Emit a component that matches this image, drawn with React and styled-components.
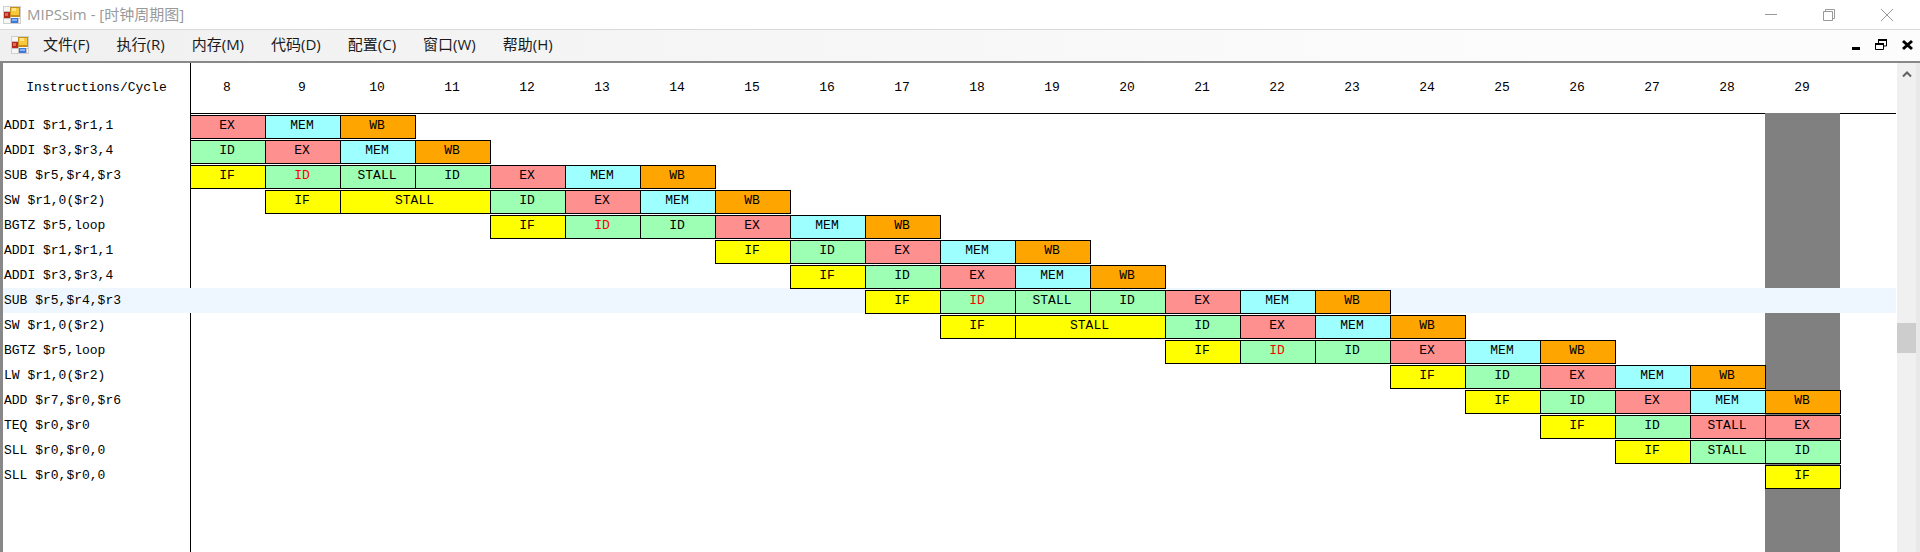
import React from 'react';
import styled, { createGlobalStyle, css } from 'styled-components';

const GlobalStyle = createGlobalStyle`
  *, *::before, *::after { box-sizing: border-box; }
  body { margin: 0; background: #fff; }
`;

const uiFont = '"Open Sans", "Noto Sans CJK SC", sans-serif';

const Window = styled.div`
  display: flex;
  flex-direction: column;
  min-height: 100vh;
  color: #000;
  font: 15px/20px ${uiFont};
`;

const TitleBar = styled.header`
  display: flex;
  align-items: center;
  height: 29px;
  padding: 0 4px 0 3px;
  gap: 6px;
`;

const Title = styled.h1`
  flex: 1;
  margin: 0;
  padding-bottom: 2px;
  font-size: 15px;
  font-weight: 400;
  line-height: 20px;
  color: #999;
`;

const CaptionButtons = styled.div`
  display: flex;
`;

const CaptionButton = styled.button`
  display: flex;
  align-items: center;
  justify-content: center;
  width: ${(p) => (p.$compact ? 26 : 58)}px;
  height: 28px;
  padding: 0;
  border: 0;
  background: none;
  color: ${(p) => (p.$compact ? '#000' : '#999')};
`;

const MenuBar = styled.nav`
  display: flex;
  align-items: center;
  height: 34px;
  padding: 0 0 2px 11px;
  border-top: 1px solid #d9d9d9;
  border-bottom: 2px solid #888;
  background: linear-gradient(90deg, #f0f0f0, #fcfcfc 80%);
`;

const MenuList = styled.div`
  display: flex;
  flex: 1;
  gap: 1px;
  padding: 0 0 1px 1px;
`;

const MenuButton = styled.button`
  padding: 0 13px;
  border: 0;
  background: none;
  color: #1a1a1a;
  font: 15px/20px ${uiFont};
  white-space: nowrap;
`;

const Workspace = styled.main`
  display: flex;
  flex: 1;
  border-left: 3px solid #888;
  border-right: 4px solid #e8e8e8;
`;

const ChartPane = styled.div`
  display: flex;
  flex: 1;
  min-width: 0;
  overflow: hidden;
`;

const Chart = styled.table`
  flex: 1;
  width: 100%;
  table-layout: fixed;
  border-spacing: 0;
  font: 13px/20px "Liberation Mono", monospace;
`;

const LabelCol = styled.col`
  width: 187px;
`;

const CycleCol = styled.col`
  width: 75px;
`;

const CornerHead = styled.th`
  height: 50px;
  padding: 0;
  font-weight: 400;
`;

const CycleHead = styled.th`
  padding: 0 1px 0 0;
  font-weight: 400;
  box-shadow: 0 1px 0 #000${(p) => (p.$axis ? ', inset 1px 0 0 #000' : '')};
`;

const Row = styled.tr`
  height: 25px;
`;

const InstructionHead = styled.th`
  padding: 0 0 0 1px;
  font-weight: 400;
  text-align: left;
  white-space: nowrap;
  background: ${(p) => (p.$selected ? '#eef6ff' : 'none')};
`;

const Slot = styled.td`
  padding: 2px 0 0;
  vertical-align: top;
  ${(p) => p.$axis && css`box-shadow: inset 1px 0 0 #000;`}
  ${(p) => p.$current && css`background: #808080;`}
  ${(p) => p.$selected && css`background: #eef6ff; box-shadow: none;`}
`;

const stageColors = {
  IF: '#ffff00',
  ID: '#9dffb4',
  EX: '#ff9090',
  MEM: '#9dffff',
  WB: '#ffa500',
};

const Stage = styled.div`
  position: relative;
  height: 24px;
  margin: 0 -1px -1px 0;
  padding-right: 2px;
  border: 1px solid #000;
  background: ${(p) => stageColors[p.$stage]};
  color: ${(p) => (p.$hazard ? '#ff0000' : '#000')};
  line-height: 20px;
  text-align: center;
`;

const ScrollTrack = styled.div`
  display: flex;
  flex-direction: column;
  align-items: center;
  width: 19px;
  margin-left: 1px;
  background: #f0f0f0;
`;

const ScrollArrow = styled.button`
  display: flex;
  align-items: center;
  justify-content: center;
  width: 19px;
  height: 22px;
  padding: 0;
  border: 0;
  background: none;
`;

const ScrollThumb = styled.div`
  width: 19px;
  height: 30px;
  margin-top: 238px;
  background: #cdcdcd;
`;

function AppIcon() {
  return (
    <svg width="18" height="18" viewBox="0 0 18 18" aria-hidden="true">
      <rect x="0.5" y="0.5" width="17" height="17" fill="#f6f6f6" stroke="#cfcfcf" />
      <path d="M7.5 1v16M1 5.500h6M1 12.500h16M15.500 12v5" stroke="#c4c4c4" />
      <rect x="1" y="6" width="6" height="6" fill="#b52a1c" />
      <rect x="2" y="7" width="3" height="3" fill="#d96a5c" />
      <rect x="7" y="1" width="10" height="10" fill="#c98f14" />
      <rect x="8" y="2" width="8" height="7" fill="#f8c93c" />
      <rect x="9" y="2" width="4" height="3" fill="#ffe48a" />
      <rect x="8" y="12" width="7" height="5" fill="#3f78d8" />
      <rect x="9" y="13" width="5" height="2" fill="#86b4f5" />
    </svg>
  );
}

const cycles = Array.from({ length: 22 }, (_, i) => i + 8);
const currentCycle = 29;

const s = (stage, span = 1, text = stage) => ({ stage, span, text });
const hazard = { ...s('ID'), hazard: true };

const program = [
  { code: 'ADDI $r1,$r1,1', start: 8, stages: [s('EX'), s('MEM'), s('WB')] },
  { code: 'ADDI $r3,$r3,4', start: 8, stages: [s('ID'), s('EX'), s('MEM'), s('WB')] },
  { code: 'SUB $r5,$r4,$r3', start: 8, stages: [s('IF'), hazard, s('ID', 1, 'STALL'), s('ID'), s('EX'), s('MEM'), s('WB')] },
  { code: 'SW $r1,0($r2)', start: 9, stages: [s('IF'), s('IF', 2, 'STALL'), s('ID'), s('EX'), s('MEM'), s('WB')] },
  { code: 'BGTZ $r5,loop', start: 12, stages: [s('IF'), hazard, s('ID'), s('EX'), s('MEM'), s('WB')] },
  { code: 'ADDI $r1,$r1,1', start: 15, stages: [s('IF'), s('ID'), s('EX'), s('MEM'), s('WB')] },
  { code: 'ADDI $r3,$r3,4', start: 16, stages: [s('IF'), s('ID'), s('EX'), s('MEM'), s('WB')] },
  { code: 'SUB $r5,$r4,$r3', start: 17, selected: true, stages: [s('IF'), hazard, s('ID', 1, 'STALL'), s('ID'), s('EX'), s('MEM'), s('WB')] },
  { code: 'SW $r1,0($r2)', start: 18, stages: [s('IF'), s('IF', 2, 'STALL'), s('ID'), s('EX'), s('MEM'), s('WB')] },
  { code: 'BGTZ $r5,loop', start: 21, stages: [s('IF'), hazard, s('ID'), s('EX'), s('MEM'), s('WB')] },
  { code: 'LW $r1,0($r2)', start: 24, stages: [s('IF'), s('ID'), s('EX'), s('MEM'), s('WB')] },
  { code: 'ADD $r7,$r0,$r6', start: 25, stages: [s('IF'), s('ID'), s('EX'), s('MEM'), s('WB')] },
  { code: 'TEQ $r0,$r0', start: 26, stages: [s('IF'), s('ID'), s('EX', 1, 'STALL'), s('EX')] },
  { code: 'SLL $r0,$r0,0', start: 27, stages: [s('IF'), s('ID', 1, 'STALL'), s('ID')] },
  { code: 'SLL $r0,$r0,0', start: 29, stages: [s('IF')] },
];

const menus = ['文件(F)', '执行(R)', '内存(M)', '代码(D)', '配置(C)', '窗口(W)', '帮助(H)'];

function InstructionRow({ code, start, stages, selected }) {
  const slots = [];
  let cycle = cycles[0];
  let next = 0;
  while (cycle <= currentCycle) {
    const stage = cycle >= start ? stages[next++] : undefined;
    slots.push(
      <Slot
        key={cycle}
        colSpan={stage ? stage.span : 1}
        $axis={cycle === cycles[0]}
        $current={cycle === currentCycle}
        $selected={selected}
      >
        {stage && <Stage $stage={stage.stage} $hazard={stage.hazard}>{stage.text}</Stage>}
      </Slot>
    );
    cycle += stage ? stage.span : 1;
  }
  return (
    <Row>
      <InstructionHead scope="row" $selected={selected}>{code}</InstructionHead>
      {slots}
      <Slot $selected={selected} />
    </Row>
  );
}

export default function App() {
  return (
    <Window>
      <GlobalStyle />
      <TitleBar>
        <AppIcon />
        <Title>MIPSsim - [时钟周期图]</Title>
        <CaptionButtons>
          <CaptionButton aria-label="Minimize">
            <svg width="12" height="12" stroke="currentColor"><path d="M0 5.5h12" /></svg>
          </CaptionButton>
          <CaptionButton aria-label="Restore">
            <svg width="12" height="12" fill="none" stroke="currentColor">
              <path d="M0.5 2.5h9v9h-9zM2.5 2.5v-2h9v9h-2" />
            </svg>
          </CaptionButton>
          <CaptionButton aria-label="Close">
            <svg width="12" height="12" stroke="currentColor"><path d="M0 0l12 12M12 0L0 12" /></svg>
          </CaptionButton>
        </CaptionButtons>
      </TitleBar>
      <MenuBar>
        <AppIcon />
        <MenuList>
          {menus.map((m) => <MenuButton key={m}>{m}</MenuButton>)}
        </MenuList>
        <CaptionButtons>
          <CaptionButton $compact aria-label="Minimize chart">
            <svg width="12" height="12" fill="currentColor"><path d="M3 8h8v3H3z" /></svg>
          </CaptionButton>
          <CaptionButton $compact aria-label="Restore chart">
            <svg width="12" height="12" fill="none" stroke="currentColor">
              <path d="M0.5 4.5h8v6h-8zM3.5 4v-3h8v6h-3" />
              <path d="M0 5h9M3 1h9" strokeWidth="2" />
            </svg>
          </CaptionButton>
          <CaptionButton $compact aria-label="Close chart">
            <svg width="12" height="12" stroke="currentColor" strokeWidth="3"><path d="M2 2l9 8M11 2L2 10" /></svg>
          </CaptionButton>
        </CaptionButtons>
      </MenuBar>
      <Workspace>
        <ChartPane>
          <Chart>
            <colgroup>
              <LabelCol />
              {cycles.map((c) => <CycleCol key={c} />)}
              <col />
            </colgroup>
            <thead>
              <tr>
                <CornerHead scope="col">Instructions/Cycle</CornerHead>
                {cycles.map((c) => <CycleHead key={c} scope="col" $axis={c === cycles[0]}>{c}</CycleHead>)}
                <CycleHead as="td" />
              </tr>
            </thead>
            <tbody>
              {program.map((row, i) => <InstructionRow key={i} {...row} />)}
              <tr>
                <td />
                {cycles.map((c) => <Slot key={c} $axis={c === cycles[0]} $current={c === currentCycle} />)}
                <td />
              </tr>
            </tbody>
          </Chart>
        </ChartPane>
        <ScrollTrack>
          <ScrollArrow aria-label="Scroll up">
            <svg width="10" height="8" fill="none" stroke="#606060" strokeWidth="2"><path d="M1 6.500l4-4 4 4" /></svg>
          </ScrollArrow>
          <ScrollThumb />
        </ScrollTrack>
      </Workspace>
    </Window>
  );
}
